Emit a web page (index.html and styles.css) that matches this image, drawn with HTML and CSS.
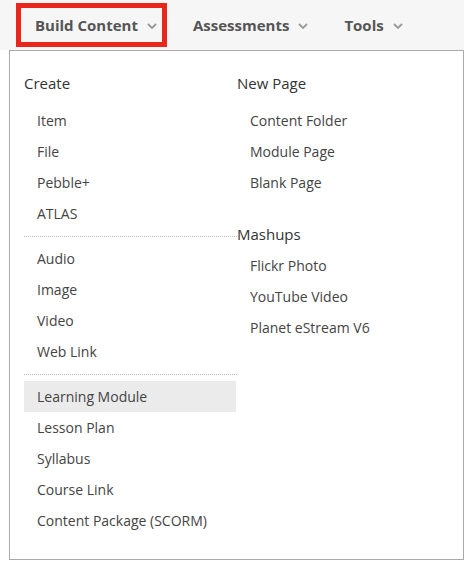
FILE: index.html
```html
<!DOCTYPE html>
<html lang="en">
<head>
  <meta charset="UTF-8">
  <title>Build Content menu</title>
  <link rel="stylesheet" href="styles.css">
</head>
<body>

<div class="page">
  <!-- Top menu bar -->
  <div class="menubar">
    <div class="menu-item active">Build Content
      <svg class="chev" width="10" height="6" viewBox="0 0 10 6"><polyline points="1,1 5,5 9,1" /></svg>
    </div>
    <div class="menu-item">Assessments
      <svg class="chev" width="10" height="6" viewBox="0 0 10 6"><polyline points="1,1 5,5 9,1" /></svg>
    </div>
    <div class="menu-item">Tools
      <svg class="chev" width="10" height="6" viewBox="0 0 10 6"><polyline points="1,1 5,5 9,1" /></svg>
    </div>
  </div>

  <!-- Dropdown panel -->
  <div class="dropdown">
    <div class="col col-left">
      <div class="heading">Create</div>
      <ul class="items">
        <li>Item</li>
        <li>File</li>
        <li>Pebble+</li>
        <li>ATLAS</li>
      </ul>
      <div class="sep"></div>
      <ul class="items">
        <li>Audio</li>
        <li>Image</li>
        <li>Video</li>
        <li>Web Link</li>
      </ul>
      <div class="sep"></div>
      <ul class="items">
        <li class="hover">Learning Module</li>
        <li>Lesson Plan</li>
        <li>Syllabus</li>
        <li>Course Link</li>
        <li>Content Package (SCORM)</li>
      </ul>
    </div>
    <div class="col col-right">
      <div class="heading">New Page</div>
      <ul class="items">
        <li>Content Folder</li>
        <li>Module Page</li>
        <li>Blank Page</li>
      </ul>
      <div class="heading heading-tight">Mashups</div>
      <ul class="items">
        <li>Flickr Photo</li>
        <li>YouTube Video</li>
        <li>Planet eStream V6</li>
      </ul>
    </div>
  </div>
</div>

</body>
</html>
```

FILE: styles.css
```css
html, body {
  margin: 0;
  background-color: #fff;
  font-family: "Open Sans", "Liberation Sans", sans-serif;
}

.page {
  width: 464px;
}

/* Top bar */
.menubar {
  display: flex;
  align-items: center;
  height: 50px;
  background-color: #f6f6f6;
}

.menu-item {
  display: flex;
  align-items: center;
  gap: 9px;
  font-size: 15px;
  font-weight: 700;
  color: #555;
  padding: 0 14px;
  height: 44px;
  margin-right: 8px;
}

.menu-item.active {
  margin-left: 16px;
  border: 5px solid #e8261c;
  height: 34px;
  padding: 0 5px 0 14px;
  margin-right: 12px;
}

.chev {
  margin-top: 2px;
}

.chev polyline {
  fill: none;
  stroke: #9a9a9a;
  stroke-width: 1.8;
}

/* Dropdown */
.dropdown {
  display: flex;
  margin-left: 9px;
  border: 1px solid #aaa;
  padding: 17px 0 23px 14px;
  background: #fff;
}

.col-left {
  width: 213px;
}

.col-right {
  flex: 1;
}

.heading {
  font-size: 15px;
  color: #333;
  line-height: 30px;
  margin-bottom: 7px;
}

.heading-tight {
  margin-top: 21px;
  margin-bottom: 0;
  line-height: 31px;
}

.items {
  list-style: none;
  margin: 0;
  padding: 0;
}

.items li {
  font-size: 14px;
  color: #444;
  line-height: 31px;
  padding-left: 13px;
}

.items li.hover {
  background-color: #ebebeb;
  margin-right: 1px;
}

.sep {
  border-top: 1px dotted #bbb;
  margin: 7px 0 6px;
}
```
